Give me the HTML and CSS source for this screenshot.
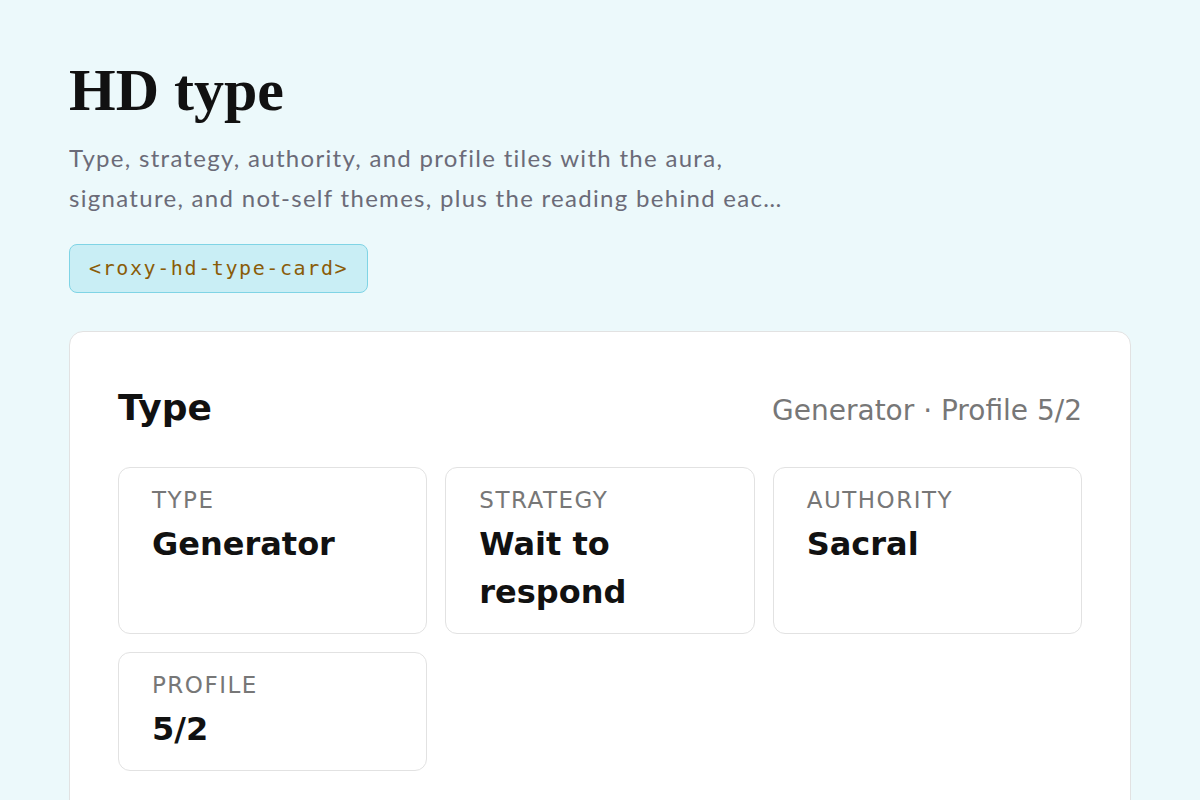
FILE: index.html
```html
<!DOCTYPE html>
<html lang="en">

<head>
  <meta charset="UTF-8">
  <meta name="viewport" content="width=device-width, initial-scale=1.0">
  <title>HD type</title>
  <link rel="stylesheet" href="styles.css">
</head>

<body>
  <div class="page">
    <h1 class="title">HD type</h1>
    <p class="lead">Type, strategy, authority, and profile tiles with the aura, signature, and not-self themes, plus the reading behind each one.</p>
    <code class="tag">&lt;roxy-hd-type-card&gt;</code>

    <div class="card">
      <div class="card_head">
        <h2>Type</h2>
        <span class="card_sub">Generator · Profile 5/2</span>
      </div>

      <div class="tiles">
        <div class="tile">
          <div class="tile_label">Type</div>
          <div class="tile_value">Generator</div>
        </div>
        <div class="tile">
          <div class="tile_label">Strategy</div>
          <div class="tile_value">Wait to respond</div>
        </div>
        <div class="tile">
          <div class="tile_label">Authority</div>
          <div class="tile_value">Sacral</div>
        </div>
        <div class="tile">
          <div class="tile_label">Profile</div>
          <div class="tile_value">5/2</div>
        </div>
      </div>
    </div>
  </div>
</body>

</html>
```

FILE: styles.css
```css
html,
body {
  width: 100%;
  height: 100%;
  overflow: hidden;
}

body {
  margin: 0;
  background-color: #ecf9fb;
  font-family: 'DejaVu Sans', sans-serif;
}

.page {
  padding: 58px 69px 0;
}

.title {
  margin: 0;
  font-family: 'Liberation Serif', serif;
  font-weight: 700;
  font-size: 60px;
  line-height: 64px;
  color: #111;
}

.lead {
  margin: 16px 0 0;
  max-width: 716px;
  font-family: 'Lato', sans-serif;
  font-size: 24px;
  letter-spacing: 1.3px;
  line-height: 40px;
  color: #6b6b78;
  display: -webkit-box;
  -webkit-line-clamp: 2;
  -webkit-box-orient: vertical;
  overflow: hidden;
}

.tag {
  display: inline-block;
  margin-top: 26px;
  padding: 12px 19px;
  border: 1.5px solid #7fd4e5;
  border-radius: 8px;
  background-color: #c9eef5;
  font-family: 'DejaVu Sans Mono', monospace;
  font-size: 20px;
  letter-spacing: 1.6px;
  line-height: 23px;
  color: #8a5c08;
}

.card {
  margin-top: 38px;
  padding: 56px 48px 48px;
  background-color: #fff;
  border: 1px solid #e2e2e2;
  border-radius: 14px;
}

.card_head {
  display: flex;
  justify-content: space-between;
  align-items: baseline;
  margin-bottom: 39px;
}

.card_head h2 {
  margin: 0;
  font-size: 36px;
  line-height: 40px;
  color: #111;
}

.card_sub {
  font-size: 28px;
  color: #777;
}

.tiles {
  display: grid;
  grid-template-columns: repeat(3, 1fr);
  gap: 18px;
}

.tile {
  padding: 19px 33px 17px;
  border: 1.5px solid #e2e2e2;
  border-radius: 12px;
}

.tile_label {
  font-size: 23px;
  letter-spacing: 1.5px;
  text-transform: uppercase;
  color: #777;
}

.tile_value {
  margin-top: 7px;
  font-size: 32px;
  font-weight: 700;
  line-height: 48px;
  color: #111;
}
```
